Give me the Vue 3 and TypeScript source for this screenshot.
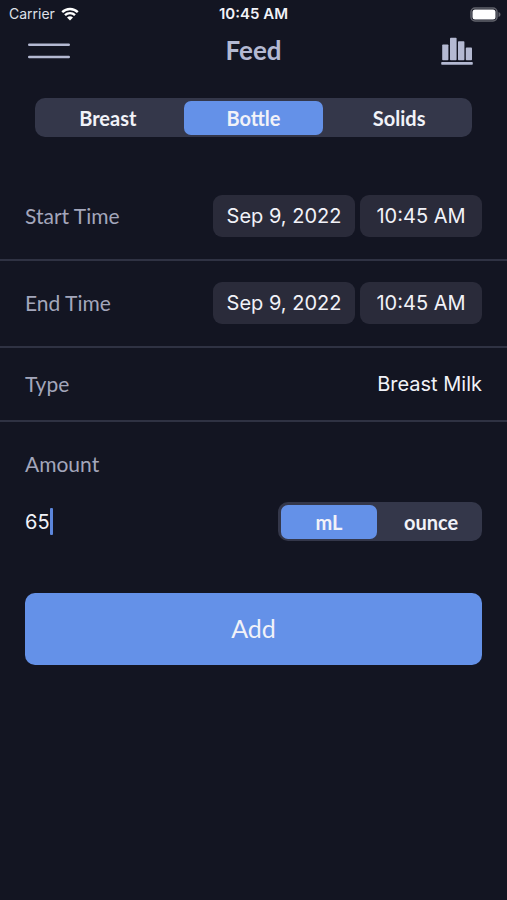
<script setup lang="ts">
import { computed, ref } from 'vue'

interface Moment {
  label: string
  date: string
  time: string
}

const methods: string[] = ['Breast', 'Bottle', 'Solids']
const units: string[] = ['mL', 'ounce']
const kinds: string[] = ['Breast Milk', 'Formula']

const moments: Moment[] = [
  { label: 'Start Time', date: 'Sep 9, 2022', time: '10:45 AM' },
  { label: 'End Time', date: 'Sep 9, 2022', time: '10:45 AM' },
]

const method = ref<string>('Bottle')
const unit = ref<string>('mL')
const kind = ref<string>('Breast Milk')
const amount = ref<string>('65')

const amountWidth = computed<string>(() => `${Math.max(amount.value.length, 1)}ch`)
</script>

<template>
  <div class="screen">
    <div class="status">
      <div class="carrier">
        <span>Carrier</span>
        <svg class="wifi" viewBox="0 0 18 14" aria-hidden="true">
          <path d="M1.2 5.200a11.200 11.200 0 0 1 15.600 0" />
          <path d="M4 8.200a7.100 7.100 0 0 1 10 0" />
          <path class="dot" d="M9 13.600 6 10.600a4.300 4.300 0 0 1 6 0z" />
        </svg>
      </div>
      <span class="clock">10:45 AM</span>
      <svg class="battery" viewBox="0 0 31 15" aria-hidden="true">
        <rect class="shell" x="1" y="1" width="26" height="13" rx="4" />
        <rect class="charge" x="2.500" y="2.500" width="23" height="10" rx="2.500" />
        <path class="cap" d="M28.500 5v5c1.300-.5 2-1.400 2-2.500s-.7-2-2-2.500z" />
      </svg>
    </div>

    <header class="bar">
      <button class="icon" type="button" aria-label="Menu">
        <svg class="menu" viewBox="0 0 42 18" aria-hidden="true">
          <path d="M1.200 2.700h39.600M1.200 15h39.600" />
        </svg>
      </button>
      <h1>Feed</h1>
      <button class="icon" type="button" aria-label="Statistics">
        <svg class="chart" viewBox="0 0 32 28" aria-hidden="true">
          <rect x="1.200" y="7.500" width="6.200" height="15.800" rx=".8" />
          <rect x="9" y=".8" width="6.600" height="22.500" rx=".8" />
          <rect x="17" y="4.200" width="6.400" height="19.100" rx=".8" />
          <rect x="24.800" y="10.600" width="6.200" height="12.700" rx=".8" />
          <rect x=".2" y="25" width="31.600" height="2.800" rx=".8" />
        </svg>
      </button>
    </header>

    <form @submit.prevent>
      <div class="segments methods" role="radiogroup" aria-label="Feeding method">
        <label v-for="m in methods" :key="m" class="segment">
          <input v-model="method" type="radio" name="method" :value="m" />
          <span>{{ m }}</span>
        </label>
      </div>

      <div v-for="item in moments" :key="item.label" class="row">
        <span class="name">{{ item.label }}</span>
        <div class="chips">
          <button class="chip date" type="button">{{ item.date }}</button>
          <button class="chip time" type="button">{{ item.time }}</button>
        </div>
      </div>

      <div class="row type">
        <label class="name" for="kind">Type</label>
        <select id="kind" v-model="kind">
          <option v-for="k in kinds" :key="k" :value="k">{{ k }}</option>
        </select>
      </div>

      <div class="amount">
        <label class="name" for="amount">Amount</label>
        <div class="entry">
          <div class="field">
            <input
              id="amount"
              v-model="amount"
              type="text"
              inputmode="numeric"
              autocomplete="off"
              :style="{ width: amountWidth }"
            />
            <span class="caret"></span>
          </div>
          <div class="segments units" role="radiogroup" aria-label="Unit">
            <label v-for="u in units" :key="u" class="segment">
              <input v-model="unit" type="radio" name="unit" :value="u" />
              <span>{{ u }}</span>
            </label>
          </div>
        </div>
      </div>

      <button class="add" type="submit">Add</button>
    </form>
  </div>
</template>

<style>
body {
  background: #131522;
}
</style>

<style scoped>
.screen {
  min-height: 100vh;
  background: #131522;
  color: #f1f2f8;
  font-family: Lato, 'Open Sans', sans-serif;
  font-size: 21px;
  line-height: 28px;
}

button,
input,
select {
  margin: 0;
  padding: 0;
  border: 0;
  background: none;
  color: inherit;
  font: inherit;
}

button,
select {
  cursor: pointer;
}

.status {
  display: grid;
  grid-template-columns: 1fr auto 1fr;
  align-items: center;
  height: 28px;
  padding: 0 6px;
  font-family: Inter, sans-serif;
  font-size: 14px;
}

.carrier {
  display: flex;
  align-items: center;
  gap: 6px;
  padding-left: 3px;
  color: #dfe0e8;
}

.wifi {
  width: 18px;
  height: 14px;
  fill: none;
  stroke: #ffffff;
  stroke-width: 2.4;
}

.wifi .dot {
  fill: #ffffff;
  stroke: none;
}

.clock {
  font-size: 15px;
  font-weight: 600;
}

.battery {
  justify-self: end;
  width: 31px;
  height: 15px;
}

.shell {
  fill: none;
  stroke: #62636c;
  stroke-width: 1.5;
}

.charge {
  fill: #ffffff;
}

.cap {
  fill: #62636c;
}

.bar {
  display: grid;
  grid-template-columns: 1fr auto 1fr;
  align-items: center;
  height: 46px;
  padding: 0 28px;
  color: #b4b9d2;
}

.icon {
  display: flex;
}

.icon:last-child {
  justify-self: end;
  padding-right: 6px;
}

.menu {
  width: 42px;
  height: 18px;
  fill: none;
  stroke: currentColor;
  stroke-width: 2.4;
  stroke-linecap: round;
}

.chart {
  width: 32px;
  height: 28px;
  fill: currentColor;
}

h1 {
  margin: 0;
  padding-bottom: 2px;
  font-size: 26px;
  font-weight: 700;
}

.segments {
  display: flex;
  box-sizing: border-box;
  height: 39px;
  border-radius: 10px;
  background: #34374a;
}

.methods {
  margin: 24px 35px 37px;
}

.units {
  width: 204px;
}

.segment {
  display: flex;
  flex: 1;
  padding: 3px 3px 2px;
  cursor: pointer;
}

.segment input {
  appearance: none;
  width: 0;
}

.segment span {
  flex: 1;
  border-radius: 7px;
  font-size: 20px;
  font-weight: 700;
  line-height: 34px;
  text-align: center;
}

.segment input:checked + span {
  background: #6491e8;
}

.row {
  display: flex;
  align-items: center;
  justify-content: space-between;
  padding: 21px 25px 22px;
  border-bottom: 2px solid #2f3243;
}

.name {
  color: #a3a6bb;
}

.chips {
  display: flex;
  gap: 5px;
}

.chip {
  height: 42px;
  border-radius: 9px;
  background: #2a2b3a;
  font-family: Inter, sans-serif;
  font-size: 20px;
}

.date {
  width: 142px;
}

.time {
  width: 122px;
}

.type {
  padding-block: 22px;
}

select {
  appearance: none;
  font-family: Inter, sans-serif;
  font-size: 20px;
  text-align-last: right;
}

option {
  background: #2a2b3a;
}

.amount {
  padding: 28px 25px 0;
}

.entry {
  display: flex;
  align-items: center;
  justify-content: space-between;
  margin-top: 24px;
}

.field {
  display: flex;
  align-items: center;
  font-family: Inter, sans-serif;
  font-size: 20px;
}

.field input {
  outline: none;
  caret-color: transparent;
}

.caret {
  width: 3px;
  height: 27px;
  border-radius: 1px;
  background: #5c86dc;
}

.add {
  display: block;
  width: calc(100% - 50px);
  height: 72px;
  margin: 52px 25px 0;
  padding-bottom: 2px;
  border-radius: 10px;
  background: #6491e8;
  font-size: 25px;
}
</style>
